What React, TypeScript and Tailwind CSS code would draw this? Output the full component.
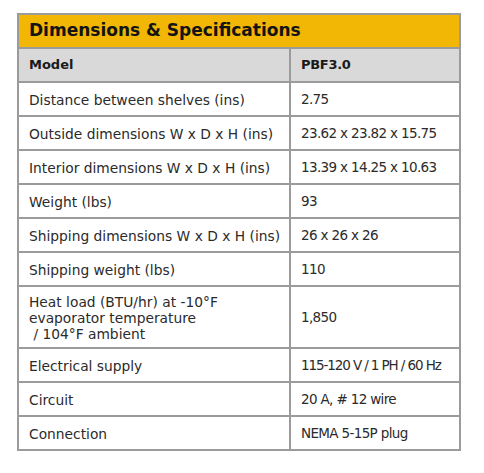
const rows: { label: string[]; value: string; tall?: boolean; tight?: boolean }[] = [
  { label: ["Distance between shelves (ins)"], value: "2.75" },
  { label: ["Outside dimensions W x D x H (ins)"], value: "23.62 x 23.82 x 15.75" },
  { label: ["Interior dimensions W x D x H (ins)"], value: "13.39 x 14.25 x 10.63" },
  { label: ["Weight (lbs)"], value: "93" },
  { label: ["Shipping dimensions W x D x H (ins)"], value: "26 x 26 x 26" },
  { label: ["Shipping weight (lbs)"], value: "110" },
  {
    label: ["Heat load (BTU/hr) at -10°F", "evaporator temperature", "\u00a0/ 104°F ambient"],
    value: "1,850",
    tall: true,
  },
  { label: ["Electrical supply"], value: "115-120 V / 1 PH / 60 Hz", tight: true },
  { label: ["Circuit"], value: "20 A, # 12 wire" },
  { label: ["Connection"], value: "NEMA 5-15P plug" },
];

export default function App() {
  return (
    <div className="h-[473px] w-[484px] bg-white pl-[17px] pt-[13px] font-['DejaVu_Sans',sans-serif]">
      <div className="w-[444px] border-2 border-[#9b9b9b]">
        <div className="flex h-[32px] items-center bg-[#f2b705] pl-[10px] text-[17px] font-bold text-[#141414]">
          Dimensions &amp; Specifications
        </div>

        <div className="grid h-[34px] grid-cols-[272px_1fr] border-t-2 border-[#9b9b9b] bg-[#d9d9d9] text-[13px] font-bold text-[#1a1a1a]">
          <div className="flex items-center border-r-2 border-[#9b9b9b] pl-[10px]">Model</div>
          <div className="flex items-center pl-[10px] tracking-[-0.3px]">PBF3.0</div>
        </div>

        {rows.map((row) => (
          <div
            key={row.value}
            className={`grid grid-cols-[272px_1fr] border-t-2 border-[#9b9b9b] text-[#2b2b2b] ${
              row.tall ? "h-[62px]" : "h-[34px]"
            }`}
          >
            <div className="flex flex-col justify-center border-r-2 border-[#9b9b9b] pl-[10px] pt-px text-[13.8px] leading-[16px]">
              {row.label.map((line) => (
                <span key={line} className="whitespace-pre">
                  {line}
                </span>
              ))}
            </div>
            <div
              className={`flex items-center whitespace-nowrap pl-[10px] text-[13.5px] ${
                row.tight ? "tracking-[-1.1px]" : "tracking-[-0.65px]"
              }`}
            >
              {row.value}
            </div>
          </div>
        ))}
      </div>
    </div>
  );
}
